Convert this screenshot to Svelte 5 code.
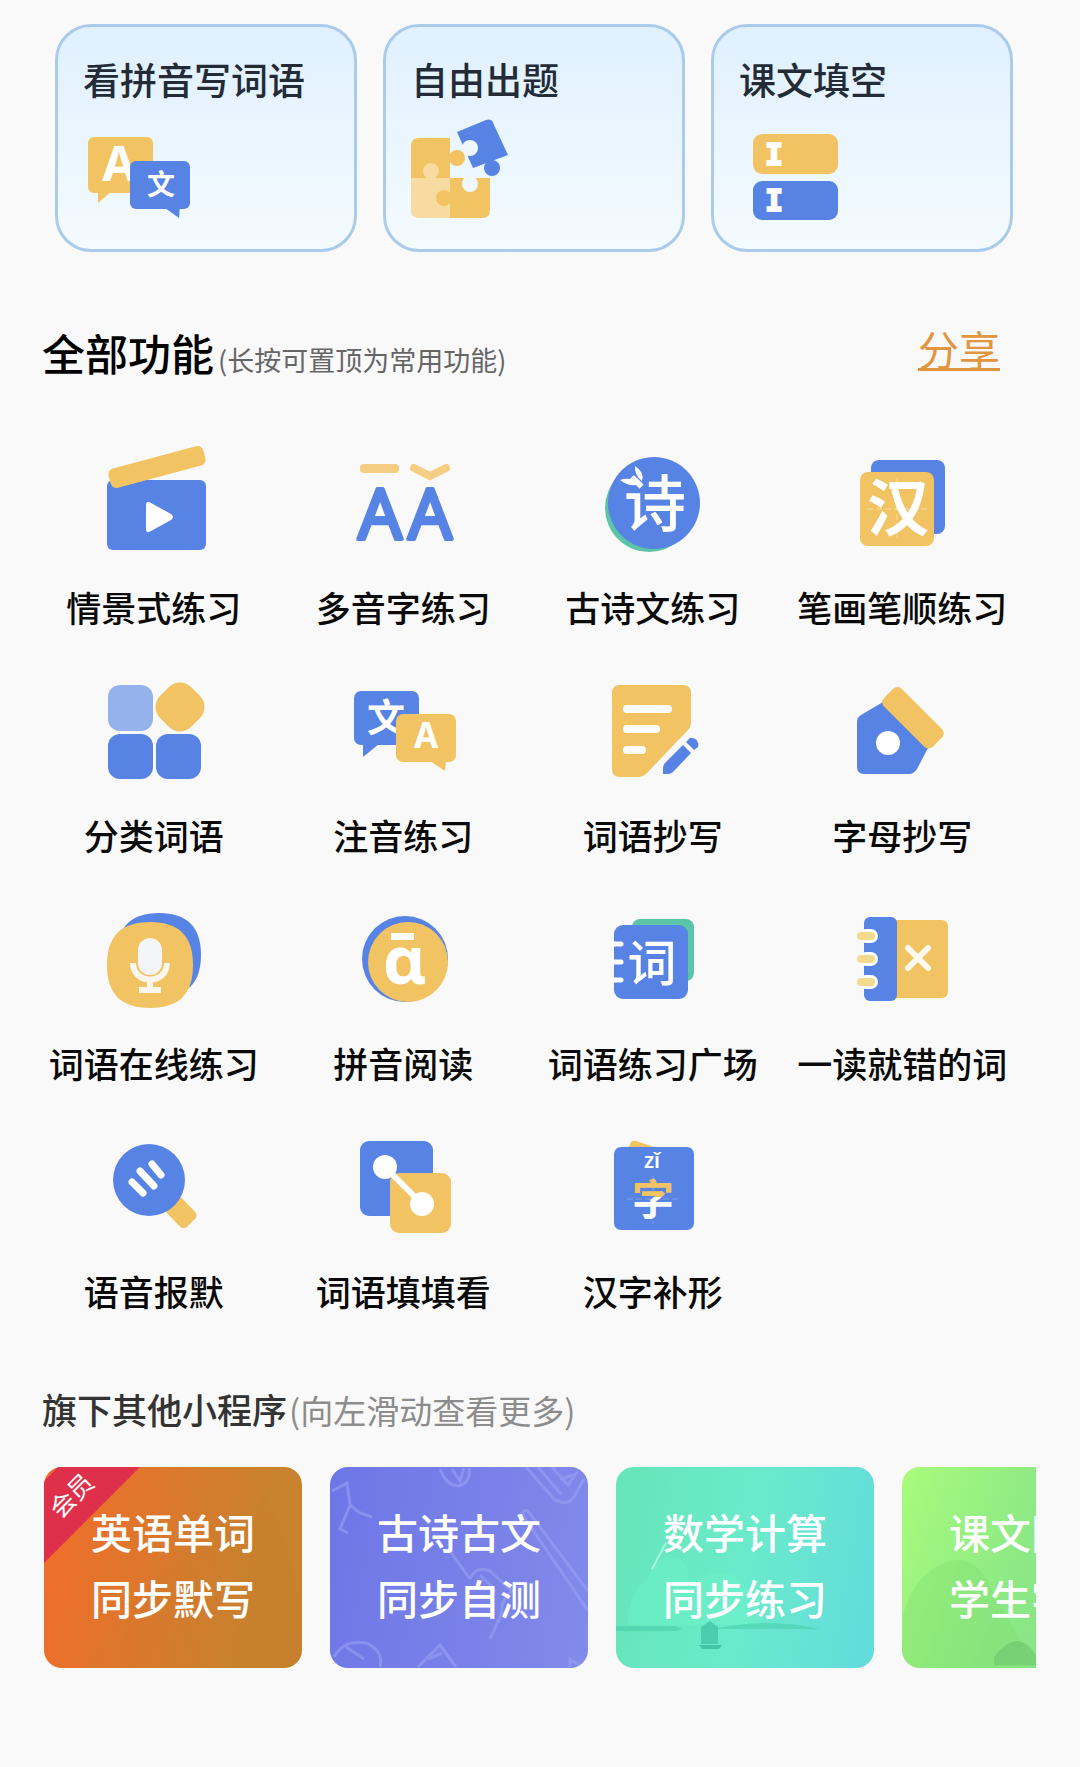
<script lang="ts">
  const pinned = [
    { icon: 'pinyin-write', label: '看拼音写词语' },
    { icon: 'puzzle', label: '自由出题' },
    { icon: 'blanks', label: '课文填空' },
  ];

  const features = [
    { icon: 'clapper', label: '情景式练习' },
    { icon: 'tones', label: '多音字练习' },
    { icon: 'poem', label: '古诗文练习' },
    { icon: 'strokes', label: '笔画笔顺练习' },
    { icon: 'category', label: '分类词语' },
    { icon: 'annotate', label: '注音练习' },
    { icon: 'copy-word', label: '词语抄写' },
    { icon: 'copy-letter', label: '字母抄写' },
    { icon: 'mic', label: '词语在线练习' },
    { icon: 'reading', label: '拼音阅读' },
    { icon: 'word-book', label: '词语练习广场' },
    { icon: 'mistakes', label: '一读就错的词' },
    { icon: 'dictation', label: '语音报默' },
    { icon: 'connect', label: '词语填填看' },
    { icon: 'complete', label: '汉字补形' },
  ];

  const apps = [
    { theme: 'orange', lines: ['英语单词', '同步默写'], vip: true },
    { theme: 'violet', lines: ['古诗古文', '同步自测'] },
    { theme: 'teal', lines: ['数学计算', '同步练习'] },
    { theme: 'green', lines: ['课文同步', '学生字词'] },
  ];
</script>

{#snippet glyph(name: string)}
  <svg class="icon" viewBox="0 0 110 110" aria-hidden="true">
    {#if name === 'pinyin-write'}
      <rect class="y" x="5" y="22" width="65" height="56" rx="6" />
      <path class="y" d="M15 76V88L29 76Z" />
      <text class="latin" x="36" y="66" font-size="49">A</text>
      <rect class="b" x="47" y="46" width="60" height="48" rx="6" />
      <path class="b" d="M82 93L96 103L97 90Z" />
      <text class="han" x="78" y="80" font-size="28">文</text>
    {:else if name === 'puzzle'}
      <path class="y" d="M8 23H39V63H0V31Q0 23 8 23Z" />
      <circle class="y" cx="46" cy="43" r="8" />
      <path class="pale" d="M0 63H39V103H8Q0 103 0 95Z" />
      <circle class="pale" cx="20" cy="56" r="8" />
      <path class="y" d="M39 63H79V95Q79 103 71 103H39Z" />
      <circle class="y" cx="33" cy="83" r="8" />
      <circle class="hole" cx="59" cy="69" r="8" />
      <path class="b" d="M46 17L75 5Q81 3 83 10L97 40L62 53Z" />
      <circle class="hole" cx="59" cy="33" r="8" />
      <circle class="b" cx="81" cy="53" r="8" />
    {:else if name === 'blanks'}
      <rect class="y" x="14" y="19" width="85" height="40" rx="9" />
      <rect class="b" x="14" y="66" width="85" height="39" rx="9" />
      <text class="mono" x="35" y="50" font-size="30">I</text>
      <text class="mono" x="35" y="96" font-size="30">I</text>
    {:else if name === 'clapper'}
      <rect class="b" x="8" y="34" width="99" height="70" rx="6" />
      <rect class="y" x="9" y="11" width="98" height="20" rx="6" transform="rotate(-15 58 21)" />
      <path class="w" d="M47 59Q47 54 52 57L72 68Q76 71 72 74L52 85Q47 88 47 83Z" />
    {:else if name === 'tones'}
      <rect x="12" y="18" width="39" height="9" rx="4" fill="#f5cd83" />
      <path d="M66 22L82 30L98 22" fill="none" stroke="#f5cd83" stroke-width="8" stroke-linecap="round" />
      <text class="tone" x="32" y="93" font-size="69">A</text>
      <text class="tone" x="82" y="93" font-size="69">A</text>
    {:else if name === 'poem'}
      <circle class="g" cx="51" cy="62" r="44" />
      <circle class="b" cx="56" cy="57" r="46" />
      <text class="han medium" x="57" y="81" font-size="62">诗</text>
      <path class="w" d="M22 34Q32 30 43 38Q32 42 22 34ZM37 20Q47 27 44 35Q36 29 37 20Z" />
    {:else if name === 'strokes'}
      <rect class="b" x="24" y="14" width="74" height="74" rx="8" />
      <rect class="y" x="13" y="26" width="74" height="74" rx="8" />
      <path d="M50 32V94M20 63H80" stroke="#fff" stroke-opacity=".45" stroke-dasharray="6 3" />
      <text class="han" x="51" y="85" font-size="62">汉</text>
    {:else if name === 'category'}
      <rect x="9" y="11" width="45" height="46" rx="12" fill="#95b2ec" />
      <rect class="y" x="59" y="11" width="44" height="44" rx="16" transform="rotate(45 81 33)" />
      <rect class="b" x="9" y="60" width="45" height="45" rx="12" />
      <rect class="b" x="57" y="60" width="45" height="45" rx="12" />
    {:else if name === 'annotate'}
      <rect class="b" x="6" y="17" width="65" height="54" rx="7" />
      <path class="b" d="M15 70V83L31 70Z" />
      <text class="han" x="38" y="57" font-size="38">文</text>
      <rect class="y" x="48" y="40" width="60" height="48" rx="7" />
      <path class="y" d="M82 87L97 97L98 86Z" />
      <text class="latin" x="78" y="74" font-size="35">A</text>
    {:else if name === 'copy-word'}
      <path class="y" d="M22 11H85Q93 11 93 19V48Q93 53 90 56L49 99Q45 103 40 103H22Q14 103 14 95V19Q14 11 22 11Z" />
      <path d="M29 35H70M29 55H58M29 76H44" stroke="#fff" stroke-width="8" stroke-linecap="round" />
      <path class="b" d="M85 71L93 79L75 98Q73 100 70 100H65V94Q65 91 67 89Z" />
      <path class="b" d="M88 68L92 64A7 7 0 0 1 100 73L96 76Z" />
    {:else if name === 'copy-letter'}
      <path class="b" d="M36 28L81 74L70 95Q67 100 62 100H17Q10 100 10 93V48Q10 43 14 41Z" />
      <rect class="y" x="32" y="31" width="69" height="25" rx="6" transform="rotate(45 66 43)" />
      <circle class="w" cx="41" cy="69" r="12" />
    {:else if name === 'mic'}
      <path class="b" d="M18 53C18 25 32 11 60 11S102 25 102 53S88 95 60 95S18 81 18 53Z" />
      <path class="y" d="M8 63C8 34 22 20 51 20S94 34 94 63S80 106 51 106S8 92 8 63Z" />
      <rect x="39" y="36" width="24" height="37" rx="12" fill="#f4f5f8" />
      <path d="M34 61C34 83 68 83 68 61M51 78V88M40 88H62" fill="none" stroke="#f9f6ee" stroke-width="6" />
    {:else if name === 'reading'}
      <circle class="b" cx="57" cy="57" r="43" />
      <circle class="y" cx="60" cy="60" r="40" />
      <rect class="w" x="43" y="31" width="23" height="7" />
      <text class="latin" x="56" y="82" font-size="67">ɑ</text>
    {:else if name === 'word-book'}
      <rect class="g" x="34" y="17" width="62" height="62" rx="8" />
      <rect class="b" x="16" y="23" width="74" height="74" rx="9" />
      <path d="M15 42H23M15 60H23M15 78H23" stroke="#fff" stroke-width="5" stroke-linecap="round" />
      <text class="han medium" x="54" y="79" font-size="49">词</text>
    {:else if name === 'mistakes'}
      <rect class="y" x="42" y="18" width="59" height="78" rx="6" />
      <rect class="b" x="17" y="15" width="33" height="84" rx="6" />
      {#each [34, 57, 80] as y}
        <rect class="w" x="12" y={y - 7} width="19" height="14" rx="7" />
        <rect x="10" y={y - 4} width="18" height="8" rx="4" fill="#f3da8f" />
      {/each}
      <path d="M61 46L81 66M81 46L61 66" stroke="#fff9ee" stroke-width="6" stroke-linecap="round" />
    {:else if name === 'dictation'}
      <rect class="y" x="78" y="39" width="32" height="21" rx="5" transform="rotate(46 50 50)" />
      <circle class="b" cx="50" cy="50" r="36" />
      <path d="M33 52L44 63M41 41L55 56M53 34L62 45" stroke="#fff" stroke-width="7" stroke-linecap="round" />
    {:else if name === 'connect'}
      <rect class="b" x="12" y="11" width="73" height="75" rx="9" />
      <rect class="y" x="42" y="43" width="61" height="60" rx="9" />
      <path d="M37 37L74 74" stroke="#fff" stroke-width="6" />
      <circle class="w" cx="37" cy="37" r="12" />
      <circle class="w" cx="74" cy="74" r="12" />
    {:else if name === 'complete'}
      <defs>
        <linearGradient id="half" x1="0" y1="0" x2="0" y2="1">
          <stop offset=".5" stop-color="#f2c362" />
          <stop offset=".5" stop-color="#fff" />
        </linearGradient>
      </defs>
      <path class="y" d="M30 19L33 12Q35 10 38 11L62 19Z" />
      <rect class="b" x="16" y="17" width="80" height="83" rx="7" />
      <path d="M29 69H83M55 46V94" stroke="#fff" stroke-opacity=".25" stroke-dasharray="6 3" />
      <text class="latin semi" x="54" y="38" font-size="21">zǐ</text>
      <text class="han half" x="55" y="85" font-size="42">字</text>
    {/if}
  </svg>
{/snippet}

{#snippet scenery(theme: string)}
  <svg class="scenery" viewBox="0 0 258 201" preserveAspectRatio="none" aria-hidden="true">
    {#if theme === 'violet'}
      <g fill="none" stroke="#9aa0f5" stroke-opacity=".6" stroke-width="3">
        <path d="M2 24L17 16L20 38L10 62L18 66M20 38L30 46L42 50" />
        <path d="M110 2Q116 18 128 19Q141 16 139 1M122 2L130 14L134 1" />
        <path d="M196 0L224 32Q236 40 244 30L254 12M208 0L232 28M222 0L238 18L248 4M230 12L244 8" />
        <path d="M258 144L194 50Q190 42 198 44L258 124" />
        <path d="M140 112Q146 98 160 104L182 124Q170 134 172 146L160 172M150 108L166 124M120 84L140 112" />
        <path d="M4 190Q14 172 36 176Q54 184 50 200M16 180L34 192M88 200L110 178L126 200M98 192L112 186" />
        <path d="M240 200V192L252 200" />
      </g>
    {:else if theme === 'teal'}
      <path d="M12 158Q14 120 32 112Q40 86 60 90Q76 96 72 122Q92 100 118 108Q140 128 150 158Z" fill="#6ff5c8" fill-opacity=".4" />
      <path d="M0 159H60L66 162L60 164H0ZM98 162Q150 150 204 162Z" fill="#42c9a5" fill-opacity=".5" />
      <path d="M50 76L36 102" stroke="#a6f8e0" stroke-width="2" />
      <path d="M85 160L94 154L102 160V177H85Z" fill="#42bfa2" fill-opacity=".7" />
      <path d="M83 178H106L103 182H86Z" fill="#38b096" fill-opacity=".7" />
    {:else if theme === 'green'}
      <path d="M8 128Q28 94 56 93Q80 94 92 128L134 201H0V150Z" fill="#7ddc70" fill-opacity=".35" />
      <path d="M92 190Q104 174 116 174Q130 176 138 198H92Z" fill="#6cc56f" fill-opacity=".6" />
    {:else}
      <path d="M40 201Q110 90 220 30Q258 90 258 201Z" fill="#c98030" fill-opacity=".1" />
    {/if}
  </svg>
{/snippet}

<main class="page">
  <section class="pinned">
    {#each pinned as item}
      <button class="pin-card">
        <span>{item.label}</span>
        {@render glyph(item.icon)}
      </button>
    {/each}
  </section>

  <header class="all-head">
    <h2>全部功能</h2>
    <small>(长按可置顶为常用功能)</small>
    <a class="share" href="#share">分享</a>
  </header>

  <section class="features">
    {#each features as item}
      <button class="feature">
        {@render glyph(item.icon)}
        <span>{item.label}</span>
      </button>
    {/each}
  </section>

  <header class="apps-head">
    <h3>旗下其他小程序</h3>
    <small>(向左滑动查看更多)</small>
  </header>

  <nav class="apps">
    {#each apps as app}
      <a class="app {app.theme}" href="#{app.theme}">
        {@render scenery(app.theme)}
        {#if app.vip}
          <span class="ribbon">会员</span>
        {/if}
        {#each app.lines as line}
          <span class="line">{line}</span>
        {/each}
      </a>
    {/each}
  </nav>
</main>

<style>
  :global(body) {
    background: #f9f9f9;
  }

  .page {
    padding: 24px 0 100px;
    font-family: 'Noto Sans CJK SC', sans-serif;
    color: #0a0a0a;
  }

  button {
    font: inherit;
    color: inherit;
    border: 0;
    background: none;
    padding: 0;
    cursor: pointer;
  }

  h2, h3 { margin: 0; }

  .icon {
    display: block;
    width: 110px;
    height: 110px;
    flex-shrink: 0;
  }

  .y { fill: #f2c362; }
  .b { fill: #5683e4; }
  .g { fill: #5cc5a8; }
  .w { fill: #fff; }
  .pale { fill: #f8dba0; }
  .hole { fill: #eff7ff; }

  .icon text {
    fill: #fff;
    text-anchor: middle;
    font-weight: 700;
  }
  .icon .han { font-family: 'Noto Sans CJK SC', sans-serif; }
  .icon .latin { font-family: 'Noto Sans', sans-serif; }
  .icon .mono {
    font-family: 'DejaVu Sans Mono', monospace;
    stroke: #fff;
    stroke-width: 2;
  }
  .icon .medium { font-weight: 500; }
  .icon .semi { font-weight: 600; }
  .icon .half { fill: url(#half); }
  .icon .tone {
    font-family: 'Open Sans', sans-serif;
    font-weight: 400;
    fill: #5683e4;
    stroke: #5683e4;
    stroke-width: 4;
    stroke-linejoin: round;
  }

  .pinned {
    display: grid;
    grid-template-columns: repeat(3, 1fr);
    gap: 26px;
    padding: 0 67px 0 55px;
  }

  .pin-card {
    display: flex;
    flex-direction: column;
    align-items: flex-start;
    gap: 9px;
    padding: 25px 25px 24px;
    border: 3px solid #abcbed;
    border-radius: 36px;
    background: linear-gradient(#e0f0ff, #f4fbff);
    font-size: 37px;
    line-height: 54px;
    font-weight: 500;
    color: #222b36;
  }

  .all-head, .apps-head {
    display: flex;
    align-items: baseline;
    line-height: 60px;
  }

  .all-head {
    padding: 0 80px 0 42px;
    margin: 70px 0 56px;
  }
  .all-head h2 {
    font-size: 43px;
    font-weight: 500;
    color: #000;
  }
  .all-head small {
    margin-left: 4px;
    font-size: 27px;
    color: #666;
  }

  .share {
    margin-left: auto;
    align-self: flex-start;
    font-size: 41px;
    line-height: 52px;
    color: #e2953f;
    text-underline-offset: 2px;
    text-decoration-thickness: 3px;
  }

  .features {
    display: grid;
    grid-template-columns: repeat(4, 1fr);
    row-gap: 43px;
    padding: 0 53px 0 29px;
  }

  .feature {
    display: flex;
    flex-direction: column;
    align-items: center;
    gap: 27px;
    font-size: 35px;
    line-height: 48px;
    font-weight: 500;
    white-space: nowrap;
  }

  .apps-head {
    padding: 0 42px;
    margin: 64px 0 27px;
  }
  .apps-head h3 {
    font-size: 35px;
    font-weight: 500;
    color: #333;
  }
  .apps-head small {
    margin-left: 2px;
    font-size: 33px;
    color: #8c8c8c;
  }

  .apps {
    display: flex;
    gap: 28px;
    margin: 0 44px;
    overflow-x: auto;
    scrollbar-width: none;
  }

  .app {
    position: relative;
    flex: 0 0 258px;
    box-sizing: border-box;
    padding: 31px 0 38px;
    display: flex;
    flex-direction: column;
    align-items: center;
    border-radius: 18px;
    overflow: hidden;
    color: #fff;
    text-decoration: none;
  }
  .orange { background: linear-gradient(100deg, #f26c2b, #c8822e 80%); }
  .violet { background: linear-gradient(100deg, #6d76e6, #828aea); }
  .teal { background: linear-gradient(100deg, #66e5b8, #6aeacb 50%, #62dbdc); }
  .green { background: linear-gradient(110deg, #a8fb7b, #8de985 45%, #7cdc88); }

  .scenery {
    position: absolute;
    inset: 0;
    width: 100%;
    height: 100%;
  }

  .line {
    position: relative;
    font-size: 41px;
    line-height: 66px;
    font-weight: 500;
    white-space: nowrap;
  }

  .ribbon {
    position: absolute;
    top: -1px;
    left: -63px;
    width: 180px;
    height: 58px;
    transform: rotate(-45deg);
    background: #df304b;
    font-size: 25px;
    line-height: 56px;
    text-align: center;
  }
</style>
